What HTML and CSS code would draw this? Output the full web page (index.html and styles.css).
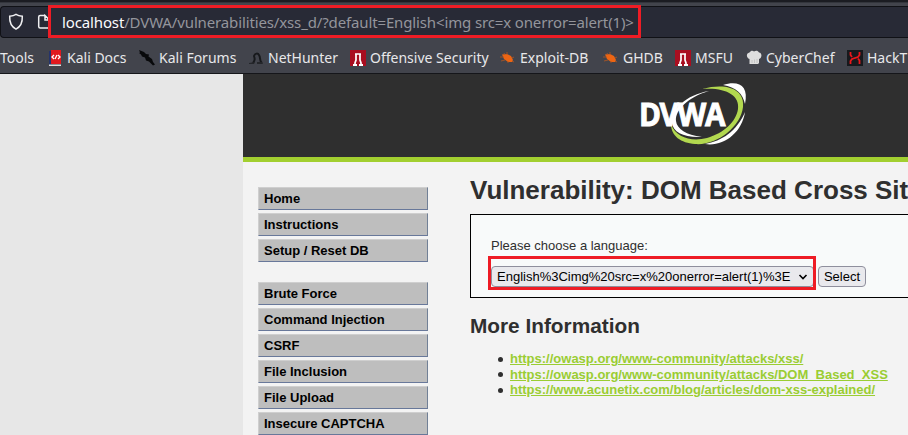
FILE: index.html
```html
<!DOCTYPE html>
<html lang="en">
<head>
<meta charset="utf-8">
<title>Vulnerability: DOM Based Cross Site Scripting</title>
<link rel="stylesheet" href="styles.css">
</head>
<body>
<header class="chrome">
  <div class="urlbar">
    <svg class="shield" width="16" height="18" viewBox="0 0 16 18"><path d="M8 1.400C6 2.700 4 3.100 1.700 3.300c-.3 5.900 1.300 10.300 6.300 12.800 5-2.500 6.600-6.900 6.300-12.800C12 3.100 10 2.700 8 1.400z"/></svg>
    <svg class="page" width="13" height="16" viewBox="0 0 13 16"><path d="M7.500 1.500H3.200Q1.700 1.500 1.700 3v9.500Q1.700 14 3.200 14H12.500V6L8 1.500V6h4.500"/></svg>
    <span class="url"><b>localhost</b>/DVWA/vulnerabilities/xss_d/?default=English&lt;img src=x onerror=alert(1)&gt;</span>
    <div class="mark mark-url"></div>
  </div>
  <nav class="bookmarks">
    <a class="tools">Tools</a>
    <a><svg viewBox="0 0 16 16"><path fill="#25346b" d="M2 1h3v14H2z"/><path fill="#e0191f" d="M4 0h10v14H4z"/><path fill="#ddd" d="M2 14.500h12V16H2z"/><path fill="none" stroke="#fff" stroke-width="1.300" d="M7 5 5 7l2 2M11 5l2 2-2 2M8 9l2-4"/></svg>Kali Docs</a>
    <a><svg viewBox="0 0 16 16"><path fill="#08090b" d="M0 0l5 2 2 2 3 .5-.5 2L13 9l1 3 2 2.500-2 1-4-4-3-1-1-3-3-1-1-2L0 3l1-.5z"/></svg>Kali Forums</a>
    <a><svg viewBox="0 0 16 16"><path fill="none" stroke="#17191c" stroke-width="2" d="M5 13c2-3 2-4 1-7 1-3 4-3 5-1 2 3 0 6 3 8"/><path fill="#24262a" d="M1 13l6-1-1 2H1zM9 12l5 0 1 2H9z"/></svg>NetHunter</a>
    <a><svg viewBox="0 0 16 16"><path fill="#a90e20" d="M0 0h16v16H0z"/><path fill="none" stroke="#fff" stroke-width="1.700" d="M5 4h6M6 4v6l-1 3v3M10 4v6l1 3v3"/><path fill="#fff" d="M3 14h4v2H3zM9 14h4v2H9z"/></svg>Offensive Security</a>
    <a><svg viewBox="0 0 16 16"><path fill="#ed6513" d="M2 4.500l5-.5 4 2 2 4-1 2-4 0-4-3z"/><path stroke="#b4571f" d="M5 5 4 3M7 5V2M4 7H0M5 10l-4 1M12 8l2-1M12 11l2 1M8 11v2" stroke-width=".8"/></svg>Exploit-DB</a>
    <a><svg viewBox="0 0 16 16"><path fill="#ed6513" d="M2 4.500l5-.5 4 2 2 4-1 2-4 0-4-3z"/><path stroke="#b4571f" d="M5 5 4 3M7 5V2M4 7H0M5 10l-4 1M12 8l2-1M12 11l2 1M8 11v2" stroke-width=".8"/></svg>GHDB</a>
    <a><svg viewBox="0 0 16 16"><path fill="#a90e20" d="M0 0h16v16H0z"/><path fill="none" stroke="#fff" stroke-width="1.700" d="M5 4h6M6 4v6l-1 3v3M10 4v6l1 3v3"/><path fill="#fff" d="M3 14h4v2H3zM9 14h4v2H9z"/></svg>MSFU</a>
    <a><svg viewBox="0 0 16 16"><path fill="#dedede" d="M3.500 14V9C0 8 0 3 3.500 2.500 5 0 7 .5 8 1.500c2-1.500 4-1 5 1 3.500.5 3 5.500 0 6.500v4l-1 1z"/><path stroke="#c4c4c4" d="M6 10v3M8.500 9.500V13M11 9v4"/></svg>CyberChef</a>
    <a><svg viewBox="0 0 16 16"><path fill="#17191d" d="M0 0h16v16H0z"/><path fill="none" stroke="#ea171b" stroke-width="1.800" d="M3.500 2v3l1.500 2M3.500 14v-3L5 9l6-2 1.500-2V2M11 8.500l1.500 2V14"/></svg>HackT</a>
  </nav>
</header>
<div class="site">
  <div class="banner">
    <svg class="logo" width="110" height="66" viewBox="0 0 110 66">
      <path fill="#fff" d="M82 3C98-2 108 4 104 22c-2-10-9-17-22-19z"/>
      <path fill="#fff" d="M104 30c-3 21-22 35-40 32 17-3 32-13 40-32z"/>
      <path fill="#b2d84f" d="M61 7c26-7 43 1 41 18-2 20-27 39-48 37-14-1-24-8-24-20 5 14 21 18 36 14 17-5 29-16 31-29C99 13 84 5 61 7z"/>
      <path fill="#fff" d="M68 9C47 15 34 28 35 39c1 8 10 14 26 16-18 1-29-5-30-14C30 27 45 13 68 9z"/>
      <text transform="translate(-2 43.500) scale(.9 1)">DVWA</text>
    </svg>
  </div>
  <div class="content">
    <nav class="menu">
      <ul><li>Home</li><li>Instructions</li><li>Setup / Reset DB</li></ul>
      <ul><li>Brute Force</li><li>Command Injection</li><li>CSRF</li><li>File Inclusion</li><li>File Upload</li><li>Insecure CAPTCHA</li></ul>
    </nav>
    <main>
      <h1>Vulnerability: DOM Based Cross Site Scripting (XSS)</h1>
      <div class="panel">
        <p>Please choose a language:</p>
        <div class="form">
          <div class="select">English%3Cimg%20src=x%20onerror=alert(1)%3E<svg width="10" height="6" viewBox="0 0 10 6"><path d="M1.500 1 5 4.500 8.500 1"/></svg><div class="mark mark-select"></div></div>
          <button>Select</button>
        </div>
      </div>
      <h2>More Information</h2>
      <ul class="links">
        <li><a>https://owasp.org/www-community/attacks/xss/</a></li>
        <li><a>https://owasp.org/www-community/attacks/DOM_Based_XSS</a></li>
        <li><a>https://www.acunetix.com/blog/articles/dom-xss-explained/</a></li>
      </ul>
    </main>
  </div>
</div>
</body>
</html>
```
FILE: styles.css
```css
* { box-sizing: border-box; }
body { margin: 0; width: 908px; height: 435px; overflow: hidden; background: #e7e7e7; font: 13px "Liberation Sans", Arial, sans-serif; color: #2f2f2f; }
.chrome { height: 74px; padding-top: 4px; background: #42444c; border-top: 2px solid #1b1c22; border-bottom: 1px solid #15161a; font-family: "Noto Sans", sans-serif; box-shadow: inset 0 1px #33353c; }
.urlbar { position: relative; display: flex; align-items: center; height: 32px; background: #282a36; border: 1px solid #101116; border-right: 0; border-radius: 4px 0 0 4px; padding-left: 7px; }
.urlbar svg { flex: none; fill: none; stroke: #f0f0f2; stroke-width: 1.500; }
.shield { margin-right: 13px; }
.page { margin-right: 12px; }
.url { color: #94959c; font-size: 15px; white-space: nowrap; letter-spacing: -.135px; }
.url b { color: #fbfbfe; font-weight: 400; }
.mark { position: absolute; border: 3px solid #ee1c25; }
.mark-url { left: 47px; top: -2px; width: 593px; height: 33px; }
.bookmarks { display: grid; grid-template-columns: 47px 92px 109px 102px 150px 103px 72px 71px 101px 70px; height: 35px; padding-top: 4px; align-items: center; font-size: 14px; color: #e8e8ea; }
.bookmarks a { display: flex; align-items: center; gap: 4px; white-space: nowrap; }
.bookmarks svg { width: 16px; height: 16px; flex: none; }
.site { margin-left: 243px; height: 361px; background: #f3f3f3; overflow: hidden; }
.banner { height: 88px; background: #2f2f2f; border-bottom: 5px solid #a2cf30; padding: 8px 0 0 398px; }
.logo { display: block; overflow: visible; }
.logo text { font: 700 33px "Open Sans", sans-serif; letter-spacing: -1.500px; fill: #fff; stroke: #fff; stroke-width: 1; }
.content { display: flex; padding-left: 15px; }
.menu { width: 170px; flex: none; padding-top: 25px; }
.menu ul { list-style: none; margin: 0 0 20px; padding: 0; }
.menu li { height: 23px; margin-bottom: 3px; padding-left: 5px; line-height: 22px; background: #bebebe; border: 1px solid; border-color: #cfcfcf #718096 #68789a #cfcfcf; font-weight: 700; color: #000; }
main { margin-left: 42px; flex: none; width: 700px; }
h1 { margin: 13px 0 9px; font-size: 26px; line-height: 30px; white-space: nowrap; }
.panel { height: 84px; border: 1px solid #000; background: #f8fafa; padding: 23px 20px 0; }
.panel p { margin: 0 0 13px; line-height: 15px; }
.form { display: flex; gap: 4px; }
.select { position: relative; display: flex; align-items: center; justify-content: space-between; width: 323px; height: 21px; padding: 0 5px; border: 1px solid #8f8f9d; border-radius: 4px; background: #e9e9ed; color: #000; white-space: nowrap; }
.select svg { fill: none; stroke: #000; stroke-width: 1.600; }
.mark-select { left: -4px; top: -11px; width: 328px; height: 34px; }
button { width: 48px; height: 21px; padding: 0; border: 1px solid #8f8f9d; border-radius: 4px; background: #e9e9ed; font: inherit; color: #000; }
h2 { margin: 16px 0 13px; font-size: 20.800px; line-height: 24px; }
.links { margin: 0; padding-left: 28px; line-height: 15.600px; list-style: none; }
.links li { display: flex; align-items: center; gap: 7px; }
.links li::before { content: ""; width: 5px; height: 5px; margin-top: 1px; border-radius: 50%; background: #2f2f2f; }
.links a { color: #9acd32; font-weight: 700; text-decoration: underline; }
```
